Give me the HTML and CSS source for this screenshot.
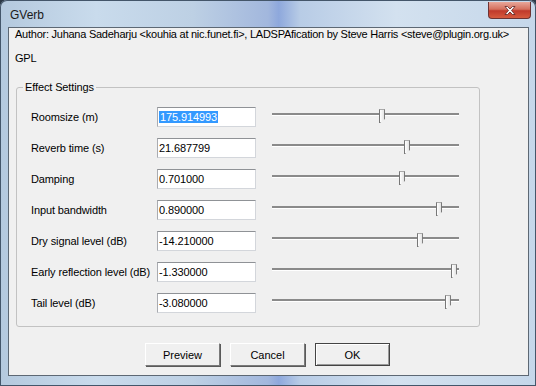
FILE: index.html
```html
<!DOCTYPE html>
<html lang="en">

<head>
    <meta charset="UTF-8">
    <title>GVerb</title>
    <link rel="stylesheet" href="styles.css">
</head>

<body>
    <div class="window">
        <div class="titlebar">
            <span class="title">GVerb</span>
            <div class="close-btn">
                <svg width="16" height="11" viewBox="0 0 16 11">
                    <path d="M3 1.5 L5.5 1.5 L8 4 L10.5 1.5 L13 1.5 L9.5 5.5 L13 9.5 L10.5 9.5 L8 7 L5.5 9.5 L3 9.5 L6.5 5.5 Z" fill="#fff" stroke="#5a2020" stroke-width="0.8" stroke-linejoin="round"/>
                </svg>
            </div>
        </div>
        <div class="client">
            <p class="info">Author: Juhana Sadeharju &lt;kouhia at nic.funet.fi&gt;, LADSPAfication by Steve Harris &lt;steve@plugin.org.uk&gt;</p>
            <p class="info licence">GPL</p>

            <fieldset class="group">
                <legend>Effect Settings</legend>

                <div class="row">
                    <span class="label">Roomsize (m)</span>
                    <div class="field"><span class="selected">175.914993</span></div>
                    <div class="slider"><div class="track"></div><div class="thumb" style="left: 58.8%"></div></div>
                </div>
                <div class="row">
                    <span class="label">Reverb time (s)</span>
                    <div class="field">21.687799</div>
                    <div class="slider"><div class="track"></div><div class="thumb" style="left: 72.2%"></div></div>
                </div>
                <div class="row">
                    <span class="label">Damping</span>
                    <div class="field">0.701000</div>
                    <div class="slider"><div class="track"></div><div class="thumb" style="left: 69.5%"></div></div>
                </div>
                <div class="row">
                    <span class="label">Input bandwidth</span>
                    <div class="field">0.890000</div>
                    <div class="slider"><div class="track"></div><div class="thumb" style="left: 89.3%"></div></div>
                </div>
                <div class="row">
                    <span class="label">Dry signal level (dB)</span>
                    <div class="field">-14.210000</div>
                    <div class="slider"><div class="track"></div><div class="thumb" style="left: 79.1%"></div></div>
                </div>
                <div class="row">
                    <span class="label">Early reflection level (dB)</span>
                    <div class="field">-1.330000</div>
                    <div class="slider"><div class="track"></div><div class="thumb" style="left: 97.3%"></div></div>
                </div>
                <div class="row">
                    <span class="label">Tail level (dB)</span>
                    <div class="field">-3.080000</div>
                    <div class="slider"><div class="track"></div><div class="thumb" style="left: 94.1%"></div></div>
                </div>
            </fieldset>

            <div class="buttons">
                <button>Preview</button>
                <button>Cancel</button>
                <button class="default">OK</button>
            </div>
        </div>
    </div>
</body>

</html>
```

FILE: styles.css
```css
body {
    margin: 0;
    padding: 0;
    background-color: #2b3846;
    font-family: "Liberation Sans", Arial, sans-serif;
    font-size: 11px;
    letter-spacing: -0.12px;
    color: #000;
}

.window {
    width: 536px;
    height: 386px;
    box-sizing: border-box;
    display: flex;
    flex-direction: column;
    padding: 0 7px 10px 8px;
    border-radius: 7px 7px 0 0;
    background: linear-gradient(90deg, #b4c9de 0%, #c9dbec 18%, #bdd0e4 36%, #a2b7dd 50%, #8ea8dc 52%, #b8cce6 56%, #d3e1ef 74%, #c5d7ea 100%);
    box-shadow: inset 0 0 0 1px #44566a;
}

.titlebar {
    height: 27px;
    display: flex;
    justify-content: space-between;
    align-items: flex-start;
}

.title {
    padding: 9px 0 0 2px;
    line-height: 13px;
    font-size: 12px;
    letter-spacing: 0;
    color: #1a1a1a;
}

.close-btn {
    width: 43px;
    height: 17px;
    margin: 2px -2px 0 0;
    display: flex;
    align-items: center;
    justify-content: center;
    border: 1px solid #6d3333;
    border-top: none;
    border-radius: 0 0 4px 4px;
    box-sizing: border-box;
    background: linear-gradient(180deg, #e8a79a 0%, #d4705e 45%, #c0392b 55%, #d65a3e 100%);
}

.client {
    flex-grow: 1;
    display: flex;
    flex-direction: column;
    background-color: #f0f0f0;
    border: 1px solid #5d6874;
}

.info {
    margin: 0;
    padding-left: 6px;
    line-height: 12px;
    letter-spacing: -0.25px;
    white-space: nowrap;
}

.licence {
    margin-top: 12px;
}

.group {
    margin: 17px 48px 0 7px;
    padding: 13px 0 13px 14px;
    border: 1px solid #c2c2c2;
    border-radius: 3px;
}

.group legend {
    margin-left: -8px;
    padding: 0 2px;
    line-height: 13px;
}

.row {
    display: flex;
    align-items: center;
    height: 20px;
    margin-bottom: 11px;
}

.row:last-child {
    margin-bottom: 0;
}

.label {
    width: 126px;
    white-space: nowrap;
}

.field {
    width: 99px;
    height: 20px;
    box-sizing: border-box;
    background-color: #fff;
    border: 1px solid #d3d6db;
    border-top-color: #8f9296;
    border-left-color: #a9abb0;
    padding: 2px 0 0 1px;
    line-height: 15px;
}

.selected {
    background-color: #3399ff;
    color: #fff;
    padding: 0 1px;
}

.slider {
    position: relative;
    width: 187px;
    height: 20px;
    margin-left: 16px;
}

.track {
    position: absolute;
    left: 0;
    right: 0;
    top: 6px;
    height: 2px;
    background-color: #8a8a8a;
    border-bottom: 1px solid #ffffff;
}

.thumb {
    position: absolute;
    top: 2px;
    width: 6px;
    height: 14px;
    margin-left: -3px;
    background: linear-gradient(90deg, #ffffff, #e4e4e4);
    border: 1px solid #777;
    border-top-color: #aaa;
    box-sizing: border-box;
    clip-path: polygon(0 0, 100% 0, 100% 72%, 15% 100%, 0 100%);
}

.buttons {
    display: flex;
    gap: 10px;
    margin-top: 16px;
    padding-left: 136px;
}

.buttons button {
    width: 75px;
    height: 23px;
    font-family: "Liberation Sans", Arial, sans-serif;
    font-size: 11px;
    color: #000;
    background-color: #f0f0f0;
    border: 1px solid;
    border-color: #ffffff #7a7a7a #7a7a7a #ffffff;
    box-shadow: 1px 1px 0 #5a5a5a;
    padding: 0;
}

.buttons button.default {
    border-color: #444;
    box-shadow: inset 1px 1px 0 #fff, inset -1px -1px 0 #9a9a9a;
}
```
